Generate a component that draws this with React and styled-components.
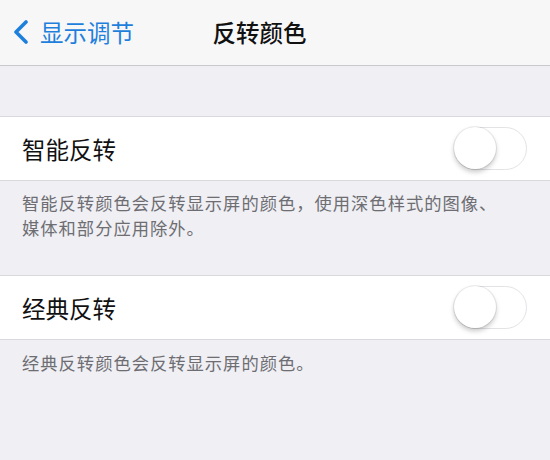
import React, { useState } from "react";
import styled, { createGlobalStyle } from "styled-components";

const Global = createGlobalStyle`
  html, body { margin: 0; padding: 0; background: #efeff4; }
  body { font-family: "Noto Sans CJK SC", "Noto Sans", sans-serif; }
`;

const Page = styled.div`
  width: 550px;
  height: 460px;
  background: #efeff4;
  overflow: hidden;
`;

const NavBar = styled.div`
  position: relative;
  height: 65px;
  background: #f7f7f8;
  border-bottom: 1px solid #c9c8cd;
  display: flex;
  align-items: center;
  justify-content: center;
`;

const Back = styled.div`
  position: absolute;
  left: 12px;
  top: 0;
  bottom: 0;
  display: flex;
  align-items: center;
  gap: 10px;
  color: #1f7fdc;
  font-size: 23.5px;
  padding-bottom: 2px;
`;

const Title = styled.div`
  font-size: 23.5px;
  font-weight: 500;
  color: #111;
  padding-bottom: 2px;
  margin-right: 31px;
`;

const Spacer = styled.div`
  height: ${(p) => p.h}px;
`;

const Row = styled.div`
  height: 63px;
  background: #fff;
  border-top: 1px solid #d9d8dc;
  border-bottom: 1px solid #d9d8dc;
  display: flex;
  align-items: center;
  justify-content: space-between;
  padding: 0 23px 0 22px;
`;

const Label = styled.div`
  font-size: 23.5px;
  color: #111;
`;

const Track = styled.div`
  width: 73px;
  height: 43px;
  border-radius: 22px;
  border: 1.5px solid #e3e3e6;
  background: #fff;
  position: relative;
  box-sizing: border-box;
`;

const Knob = styled.div`
  position: absolute;
  top: -1px;
  left: ${(p) => (p.on ? "30px" : "-1px")};
  width: 42px;
  height: 42px;
  border-radius: 50%;
  background: #fff;
  box-shadow: 0 3px 5px rgba(0, 0, 0, 0.22), 0 0 0 1px rgba(0, 0, 0, 0.07);
`;

const Note = styled.div`
  padding: ${(p) => p.pad};
  font-size: 17.3px;
  letter-spacing: 1px;
  line-height: 25px;
  color: #6d6d72;
`;

function Toggle() {
  const [on, setOn] = useState(false);
  return (
    <Track onClick={() => setOn(!on)}>
      <Knob on={on ? 1 : 0} />
    </Track>
  );
}

export default function App() {
  return (
    <Page>
      <Global />
      <NavBar>
        <Back>
          <svg width="18" height="24" viewBox="0 0 18 24">
            <path d="M14 2 L4 12 L14 22" fill="none" stroke="#1f7fdc" strokeWidth="3.6" strokeLinecap="round" strokeLinejoin="round" />
          </svg>
          <span>显示调节</span>
        </Back>
        <Title>反转颜色</Title>
      </NavBar>
      <Spacer h={50} />
      <Row>
        <Label>智能反转</Label>
        <Toggle />
      </Row>
      <Note pad="9px 22px 35px">
        智能反转颜色会反转显示屏的颜色，使用深色样式的图像、
        <br />
        媒体和部分应用除外。
      </Note>
      <Row>
        <Label>经典反转</Label>
        <Toggle />
      </Row>
      <Note pad="10px 22px 0">经典反转颜色会反转显示屏的颜色。</Note>
    </Page>
  );
}
